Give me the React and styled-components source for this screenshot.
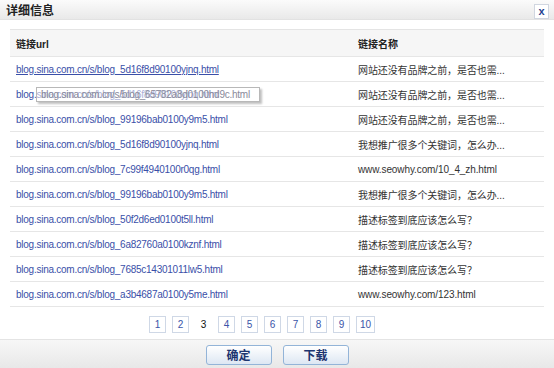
import React from 'react';
import styled, { createGlobalStyle } from 'styled-components';

const GlobalStyle = createGlobalStyle`
  html, body {
    margin: 0;
    padding: 0;
    background: #fff;
  }
  body {
    font-family: "Liberation Sans", Arial, "Noto Sans CJK SC", sans-serif;
    font-size: 10px;
    color: #333;
  }
`;

const rows = [
  { url: 'blog.sina.com.cn/s/blog_5d16f8d90100yjnq.html', name: '网站还没有品牌之前，是否也需...', hover: true },
  { url: 'blog.sina.com.cn/s/blog_5d16f8d90100yjnq.html', name: '网站还没有品牌之前，是否也需...', tip: 'blog.sina.com.cn/s/blog_65782a8d0100hd9c.html' },
  { url: 'blog.sina.com.cn/s/blog_99196bab0100y9m5.html', name: '网站还没有品牌之前，是否也需...' },
  { url: 'blog.sina.com.cn/s/blog_5d16f8d90100yjnq.html', name: '我想推广很多个关键词，怎么办...' },
  { url: 'blog.sina.com.cn/s/blog_7c99f4940100r0qg.html', name: 'www.seowhy.com/10_4_zh.html' },
  { url: 'blog.sina.com.cn/s/blog_99196bab0100y9m5.html', name: '我想推广很多个关键词，怎么办...' },
  { url: 'blog.sina.com.cn/s/blog_50f2d6ed0100t5ll.html', name: '描述标签到底应该怎么写？' },
  { url: 'blog.sina.com.cn/s/blog_6a82760a0100kznf.html', name: '描述标签到底应该怎么写？' },
  { url: 'blog.sina.com.cn/s/blog_7685c14301011lw5.html', name: '描述标签到底应该怎么写？' },
  { url: 'blog.sina.com.cn/s/blog_a3b4687a0100y5me.html', name: 'www.seowhy.com/123.html' },
];

const pages = [1, 2, 3, 4, 5, 6, 7, 8, 9, 10];

// Styled components
const Dialog = styled.div`
  width: 554px;
  height: 368px;
  display: flex;
  flex-direction: column;
  background: #fff;
  overflow: hidden;
`;

const TitleBar = styled.div`
  height: 21px;
  display: flex;
  align-items: center;
  justify-content: space-between;
  padding: 0 5px 0 6px;
  background: linear-gradient(#fbfbfb, #e9e9e9);
  border-bottom: 1px solid #e2e2e2;
`;

const Title = styled.div`
  font-size: 12px;
  font-weight: bold;
  color: #222;
  font-family: "Noto Sans CJK SC", sans-serif;
`;

const CloseButton = styled.div`
  width: 13px;
  height: 13px;
  display: flex;
  align-items: center;
  justify-content: center;
  background: #fff;
  border: 1px solid #d0d6e0;
  color: #1f3f8f;
  font-weight: bold;
  font-size: 11px;
  line-height: 1;
  margin-top: 3px;
`;

const Body = styled.div`
  flex: 1;
  padding: 9px 10px 0;
`;

const Table = styled.div`
  display: flex;
  flex-direction: column;
  border-top: 1px solid #e4e4e4;
`;

const Row = styled.div`
  position: relative;
  display: grid;
  grid-template-columns: 342px 1fr;
  height: ${p => (p.$head ? '26px' : '24px')};
  align-items: center;
  background: ${p => (p.$head ? '#f6f6f6' : '#fff')};
  border-bottom: 1px solid #e6e6e6;
`;

const Cell = styled.div`
  padding-left: 6px;
  white-space: nowrap;
  overflow: hidden;
  font-weight: ${p => (p.$head ? 'bold' : 'normal')};
  color: ${p => (p.$head ? '#222' : '#333')};
  font-size: 10px;
  letter-spacing: ${p => (p.$head ? '0' : '-0.1px')};
`;

const UrlLink = styled.a`
  color: #3a4fa8;
  text-decoration: ${p => (p.$hover ? 'underline' : 'none')};
  font-size: 10px;
  letter-spacing: -0.25px;
`;

const Tooltip = styled.div`
  position: absolute;
  left: 26px;
  top: 5px;
  width: 224px;
  height: 15px;
  display: flex;
  align-items: center;
  padding-left: 4px;
  box-sizing: border-box;
  background: rgba(255, 255, 255, 0.55);
  border: 1px solid #b8b8b8;
  box-shadow: 2px 2px 2px rgba(0, 0, 0, 0.25);
  color: #8a8a9a;
  font-size: 10px;
  letter-spacing: -0.25px;
  white-space: nowrap;
  overflow: hidden;
`;

const Pager = styled.div`
  height: 30px;
  display: flex;
  align-items: center;
  justify-content: center;
  gap: 6px;
  padding-right: 30px;
  padding-top: 2px;
`;

const PageBox = styled.div`
  min-width: 17px;
  height: 17px;
  box-sizing: border-box;
  padding: 0 3px;
  display: flex;
  align-items: center;
  justify-content: center;
  font-size: 10px;
  color: ${p => (p.$current ? '#111' : '#3a55a8')};
  border: 1px solid ${p => (p.$current ? 'transparent' : '#cfd8e6')};
  background: #fff;
`;

const Footer = styled.div`
  height: 29px;
  display: flex;
  align-items: center;
  justify-content: center;
  gap: 11px;
  padding-top: 1px;
  background: linear-gradient(#f7f7f7, #e8e8e8);
  border-top: 1px solid #e4e4e4;
`;

const Button = styled.button`
  width: 66px;
  height: 20px;
  padding: 0;
  border: 1px solid #93b4d8;
  border-radius: 3px;
  background: linear-gradient(#ffffff, #dde7f3);
  color: #1d3570;
  font-weight: bold;
  font-size: 12px;
  font-family: "Noto Sans CJK SC", sans-serif;
  line-height: 1;
`;

const App = () => {
  return (
    <Dialog>
      <GlobalStyle />
      <TitleBar>
        <Title>详细信息</Title>
        <CloseButton>x</CloseButton>
      </TitleBar>
      <Body>
        <Table>
          <Row $head>
            <Cell $head>链接url</Cell>
            <Cell $head>链接名称</Cell>
          </Row>
          {rows.map((r, i) => (
            <Row key={i}>
              <Cell>
                <UrlLink href="#" $hover={r.hover}>{r.url}</UrlLink>
              </Cell>
              <Cell>{r.name}</Cell>
              {r.tip && <Tooltip>{r.tip}</Tooltip>}
            </Row>
          ))}
        </Table>
        <Pager>
          {pages.map(n => (
            <PageBox key={n} $current={n === 3}>{n}</PageBox>
          ))}
        </Pager>
      </Body>
      <Footer>
        <Button>确定</Button>
        <Button>下载</Button>
      </Footer>
    </Dialog>
  );
};

export default App;
